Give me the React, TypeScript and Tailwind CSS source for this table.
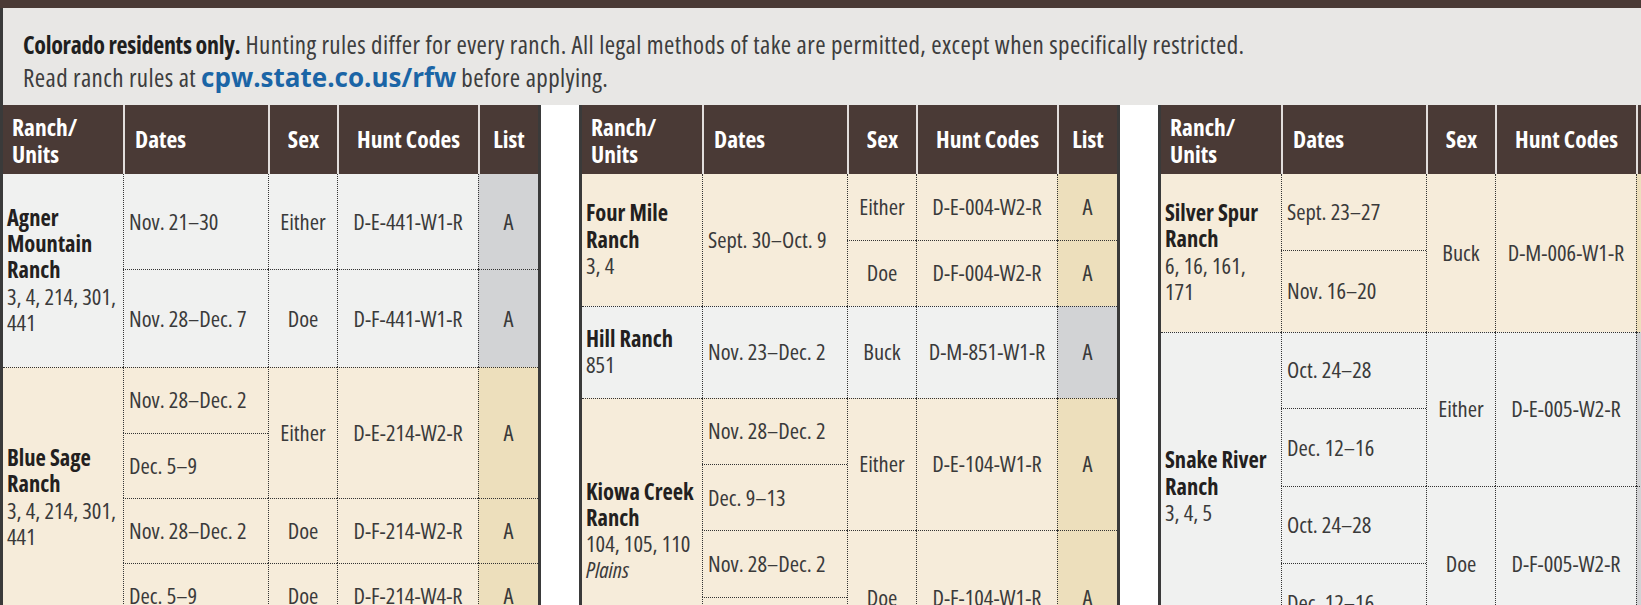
import type { ReactNode } from "react";
import clsx from "clsx";

type Bg = "gray" | "cream";

function Ranch({ bg, span, first, children }: { bg: Bg; span?: string; first?: boolean; children: ReactNode }) {
  return (
    <div
      className={clsx(
        "flex items-center pl-[4px] border-dotted border-[#333] text-[22.5px] leading-[26.3px] text-[#3a3a3a] whitespace-nowrap",
        span,
        !first && "border-t",
        bg === "gray" ? "bg-[#f0f1f0]" : "bg-[#f6ecda]"
      )}
    >
      <div>{children}</div>
    </div>
  );
}

function Cell({
  bg,
  span,
  first,
  align = "center",
  list,
  children,
}: {
  bg: Bg;
  span?: string;
  first?: boolean;
  align?: "left" | "center";
  list?: boolean;
  children: ReactNode;
}) {
  return (
    <div
      className={clsx(
        "flex items-center border-l border-dotted border-[#333] text-[22.5px] leading-[26px] text-[#3a3a3a] whitespace-nowrap",
        span,
        !first && "border-t",
        align === "left" ? "pl-[5px]" : "justify-center",
        bg === "gray" && !list && "bg-[#f0f1f0]",
        bg === "gray" && list && "bg-[#d2d3d5]",
        bg === "cream" && !list && "bg-[#f6ecda]",
        bg === "cream" && list && "bg-[#eddfbc]"
      )}
    >
      {children}
    </div>
  );
}

function Name({ children }: { children: ReactNode }) {
  return <div className="font-bold text-[#231f20]">{children}</div>;
}

function Header() {
  const h = "flex items-center bg-[#4a3a36] text-white font-bold text-[23.5px] leading-[26.7px]";
  return (
    <>
      <div className={clsx(h, "pl-[9px] pt-[3px]")}>
        Ranch/
        <br />
        Units
      </div>
      <div className={clsx(h, "pl-[10px] border-l-2 border-[#e2dedc]")}>Dates</div>
      <div className={clsx(h, "justify-center border-l-2 border-[#e2dedc]")}>Sex</div>
      <div className={clsx(h, "justify-center border-l-2 border-[#e2dedc]")}>Hunt Codes</div>
      <div className={clsx(h, "justify-center border-l-2 border-[#e2dedc]")}>List</div>
    </>
  );
}

const tableBase =
  "grid shrink-0 w-[541px] grid-cols-[120px_145px_69px_141px_60px] border-x-[3px] border-[#3a3a3a]";

function TableOne() {
  return (
    <div className={clsx(tableBase, "grid-rows-[69px_95px_98px_65.5px_65px_65px_65px]")}>
      <Header />
      <Ranch bg="gray" span="row-span-2" first>
        <Name>
          Agner
          <br />
          Mountain
          <br />
          Ranch
        </Name>
        3, 4, 214, 301,
        <br />
        441
      </Ranch>
      <Cell bg="gray" first align="left">Nov. 21–30</Cell>
      <Cell bg="gray" first>Either</Cell>
      <Cell bg="gray" first>D-E-441-W1-R</Cell>
      <Cell bg="gray" first list>A</Cell>
      <Cell bg="gray" align="left">Nov. 28–Dec. 7</Cell>
      <Cell bg="gray">Doe</Cell>
      <Cell bg="gray">D-F-441-W1-R</Cell>
      <Cell bg="gray" list>A</Cell>

      <Ranch bg="cream" span="row-span-4">
        <Name>
          Blue Sage
          <br />
          Ranch
        </Name>
        3, 4, 214, 301,
        <br />
        441
      </Ranch>
      <Cell bg="cream" align="left">Nov. 28–Dec. 2</Cell>
      <Cell bg="cream" span="row-span-2">Either</Cell>
      <Cell bg="cream" span="row-span-2">D-E-214-W2-R</Cell>
      <Cell bg="cream" span="row-span-2" list>A</Cell>
      <Cell bg="cream" align="left">Dec. 5–9</Cell>
      <Cell bg="cream" align="left">Nov. 28–Dec. 2</Cell>
      <Cell bg="cream">Doe</Cell>
      <Cell bg="cream">D-F-214-W2-R</Cell>
      <Cell bg="cream" list>A</Cell>
      <Cell bg="cream" align="left">Dec. 5–9</Cell>
      <Cell bg="cream">Doe</Cell>
      <Cell bg="cream">D-F-214-W4-R</Cell>
      <Cell bg="cream" list>A</Cell>
    </div>
  );
}

function TableTwo() {
  return (
    <div className={clsx(tableBase, "grid-rows-[69px_65.5px_66px_92px_66.7px_66px_66.7px_67px]")}>
      <Header />
      <Ranch bg="cream" span="row-span-2" first>
        <Name>
          Four Mile
          <br />
          Ranch
        </Name>
        3, 4
      </Ranch>
      <Cell bg="cream" span="row-span-2" first align="left">Sept. 30–Oct. 9</Cell>
      <Cell bg="cream" first>Either</Cell>
      <Cell bg="cream" first>D-E-004-W2-R</Cell>
      <Cell bg="cream" first list>A</Cell>
      <Cell bg="cream">Doe</Cell>
      <Cell bg="cream">D-F-004-W2-R</Cell>
      <Cell bg="cream" list>A</Cell>

      <Ranch bg="gray">
        <Name>Hill Ranch</Name>
        851
      </Ranch>
      <Cell bg="gray" align="left">Nov. 23–Dec. 2</Cell>
      <Cell bg="gray">Buck</Cell>
      <Cell bg="gray">D-M-851-W1-R</Cell>
      <Cell bg="gray" list>A</Cell>

      <Ranch bg="cream" span="row-span-4">
        <Name>
          Kiowa Creek
          <br />
          Ranch
        </Name>
        104, 105, 110
        <br />
        <i>Plains</i>
      </Ranch>
      <Cell bg="cream" align="left">Nov. 28–Dec. 2</Cell>
      <Cell bg="cream" span="row-span-2">Either</Cell>
      <Cell bg="cream" span="row-span-2">D-E-104-W1-R</Cell>
      <Cell bg="cream" span="row-span-2" list>A</Cell>
      <Cell bg="cream" align="left">Dec. 9–13</Cell>
      <Cell bg="cream" align="left">Nov. 28–Dec. 2</Cell>
      <Cell bg="cream" span="row-span-2">Doe</Cell>
      <Cell bg="cream" span="row-span-2">D-F-104-W1-R</Cell>
      <Cell bg="cream" span="row-span-2" list>A</Cell>
      <Cell bg="cream" align="left">Dec. 9–13</Cell>
    </div>
  );
}

function TableThree() {
  return (
    <div className={clsx(tableBase, "grid-rows-[69px_76px_81.5px_76.5px_78px_77px_78px]")}>
      <Header />
      <Ranch bg="cream" span="row-span-2" first>
        <Name>
          Silver Spur
          <br />
          Ranch
        </Name>
        6, 16, 161,
        <br />
        171
      </Ranch>
      <Cell bg="cream" first align="left">Sept. 23–27</Cell>
      <Cell bg="cream" span="row-span-2" first>Buck</Cell>
      <Cell bg="cream" span="row-span-2" first>D-M-006-W1-R</Cell>
      <Cell bg="cream" span="row-span-2" first list>A</Cell>
      <Cell bg="cream" align="left">Nov. 16–20</Cell>

      <Ranch bg="gray" span="row-span-4">
        <Name>
          Snake River
          <br />
          Ranch
        </Name>
        3, 4, 5
      </Ranch>
      <Cell bg="gray" align="left">Oct. 24–28</Cell>
      <Cell bg="gray" span="row-span-2">Either</Cell>
      <Cell bg="gray" span="row-span-2">D-E-005-W2-R</Cell>
      <Cell bg="gray" span="row-span-2" list>A</Cell>
      <Cell bg="gray" align="left">Dec. 12–16</Cell>
      <Cell bg="gray" align="left">Oct. 24–28</Cell>
      <Cell bg="gray" span="row-span-2">Doe</Cell>
      <Cell bg="gray" span="row-span-2">D-F-005-W2-R</Cell>
      <Cell bg="gray" span="row-span-2" list>A</Cell>
      <Cell bg="gray" align="left">Dec. 12–16</Cell>
    </div>
  );
}

export default function App() {
  return (
    <div className="w-[1641px] h-[605px] overflow-hidden bg-white font-['Open_Sans',sans-serif] font-stretch-[75%]">
      <div className="h-[8px] bg-[#4a3a36]" />
      <div className="border-l-[3px] border-[#3a3a3a] bg-[#e8e7e5] pl-[20px] pt-[20px] pb-[12px] text-[25px] leading-[32px] tracking-[0.4px] text-[#3d3d3d] font-stretch-[80%]">
        <p>
          <b className="text-[24px] font-stretch-[75%] tracking-[-0.3px] text-[#1f1f1f]">Colorado residents only.</b>{" "}
          Hunting rules differ for every ranch. All legal methods of take are permitted, except when specifically
          restricted.
        </p>
        <p>
          Read ranch rules at{" "}
          <a className="font-bold font-stretch-[100%] tracking-normal text-[26px] text-[#1b65a6]">
            cpw.state.co.us/rfw
          </a>{" "}
          before applying.
        </p>
      </div>
      <div className="flex gap-[38px]">
        <TableOne />
        <TableTwo />
        <TableThree />
      </div>
    </div>
  );
}
